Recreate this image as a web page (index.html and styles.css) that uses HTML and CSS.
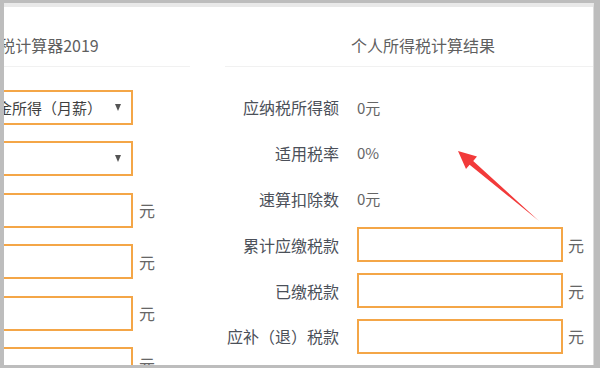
FILE: index.html
```html
<!DOCTYPE html>
<html lang="zh-CN">
<head>
<meta charset="utf-8">
<title>个人所得税计算器2019</title>
<link rel="stylesheet" href="styles.css">
</head>
<body>
<div class="screen">
  <div class="window">
    <div class="page">
      <section class="left">
        <div class="left-inner">
          <div class="title">个人所得税计算器2019</div>
          <div class="form">
            <div class="row"><div class="box select"><span class="sel-text">工资薪金所得（月薪）</span><span class="caret"></span></div><span class="unit"></span></div>
            <div class="row"><div class="box select"><span class="sel-text"></span><span class="caret"></span></div><span class="unit"></span></div>
            <div class="row"><div class="box"></div><span class="unit">元</span></div>
            <div class="row"><div class="box"></div><span class="unit">元</span></div>
            <div class="row"><div class="box"></div><span class="unit">元</span></div>
            <div class="row"><div class="box"></div><span class="unit">元</span></div>
          </div>
        </div>
      </section>
      <section class="right">
        <div class="title">个人所得税计算结果</div>
        <div class="results">
          <div class="rrow"><span class="label">应纳税所得额</span><span class="value">0元</span></div>
          <div class="rrow"><span class="label">适用税率</span><span class="value">0%</span></div>
          <div class="rrow"><span class="label">速算扣除数</span><span class="value">0元</span></div>
          <div class="rrow"><span class="label">累计应缴税款</span><div class="box rbox"></div><span class="runit">元</span></div>
          <div class="rrow"><span class="label">已缴税款</span><div class="box rbox"></div><span class="runit">元</span></div>
          <div class="rrow"><span class="label">应补（退）税款</span><div class="box rbox"></div><span class="runit">元</span></div>
          <div class="rrow"><span class="label"></span><div class="box rbox"></div><span class="runit">元</span></div>
        </div>
      </section>
    </div>
  </div>
  <svg class="arrow" width="600" height="368" viewBox="0 0 600 368" aria-hidden="true">
    <polygon points="458,151 477,156.5 473.2,160.9 539,221 469.6,164.7 466,169" fill="#f23a3a"/>
  </svg>
</div>
</body>
</html>
```
FILE: styles.css
```css
* { box-sizing: border-box; }
html, body { margin: 0; padding: 0; }
body {
  font-family: "Noto Sans CJK SC", "Noto Sans", sans-serif;
  background: #bdbdbd;
}
.screen {
  position: relative;
  width: 600px;
  height: 368px;
  padding: 3px 6px 3px 4px;
  background: #bdbdbd;
  overflow: hidden;
}
.window {
  height: 362px;
  background: #fff;
  border-top: 4px solid #e9e9e9;
  border-right: 1px solid #dcdcdc;
  overflow: hidden;
}
.page {
  display: flex;
  gap: 35px;
}
.left {
  flex: 0 0 186px;
  width: 186px;
  display: flex;
  justify-content: flex-end;
  overflow: hidden;
}
.left-inner {
  flex: 0 0 346px;
  width: 346px;
}
.right {
  flex: 0 0 396px;
  width: 396px;
}
.title {
  padding: 27px 0 10px;
  line-height: 22px;
  font-size: 16px;
  color: #5f5f5f;
  text-align: center;
  border-bottom: 1px solid #f1f1f1;
}
.form {
  margin-top: 23px;
  display: flex;
  flex-direction: column;
  gap: 16.4px;
}
.row {
  display: flex;
  justify-content: flex-end;
  align-items: center;
  padding-right: 35px;
  height: 35px;
}
.box {
  height: 35px;
  border: 2px solid #f4a647;
  background: #fff;
}
.row .box { width: 200px; }
.select {
  display: flex;
  align-items: center;
  padding: 0 8px 0 17px;
  font-size: 15px;
  color: #3f3f3f;
}
.sel-text { flex: 1; white-space: nowrap; }
.caret {
  width: 0;
  height: 0;
  border-left: 3.5px solid transparent;
  border-right: 3.5px solid transparent;
  border-top: 7px solid #555;
  margin-left: auto;
  margin-right: 2px;
}
.unit {
  width: 16px;
  margin-left: 6px;
  font-size: 16px;
  color: #666;
  line-height: 20px;
}
.results {
  margin-top: 22.5px;
  display: flex;
  flex-direction: column;
  gap: 10.9px;
}
.rrow {
  display: flex;
  align-items: center;
  height: 35px;
}
.label {
  width: 114px;
  text-align: right;
  font-size: 16px;
  color: #4b5059;
  white-space: nowrap;
}
.value {
  margin-left: 18px;
  font-size: 15px;
  color: #666;
}
.rbox {
  width: 206px;
  margin-left: 18px;
}
.runit {
  margin-left: 5px;
  font-size: 16px;
  color: #666;
}
.arrow {
  position: absolute;
  left: 0;
  top: 0;
  pointer-events: none;
}
```
